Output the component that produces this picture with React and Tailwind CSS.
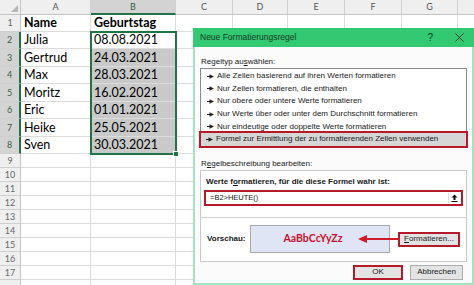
import React from 'react';

const colW = ['w-[70px]', 'w-[85px]', 'w-[57px]', 'w-[55px]', 'w-[57px]', 'w-[57px]', 'w-[56px]', 'w-[60px]'];
const letters = ['A', 'B', 'C', 'D', 'E', 'F', 'G', ''];
const rowH = ['h-[17px]', 'h-[17px]', 'h-[18px]', 'h-[17px]', 'h-[18px]', 'h-[17px]', 'h-[18px]', 'h-[17px]'];

const data = [
    ['Name', 'Geburtstag'],
    ['Julia', '08.08.2021'],
    ['Gertrud', '24.03.2021'],
    ['Max', '28.03.2021'],
    ['Moritz', '16.02.2021'],
    ['Eric', '01.01.2021'],
    ['Heike', '25.05.2021'],
    ['Sven', '30.03.2021'],
];

const rules = [
    'Alle Zellen basierend auf ihren Werten formatieren',
    'Nur Zellen formatieren, die enthalten',
    'Nur obere oder untere Werte formatieren',
    'Nur Werte über oder unter dem Durchschnitt formatieren',
    'Nur eindeutige oder doppelte Werte formatieren',
    'Formel zur Ermittlung der zu formatierenden Zellen verwenden',
];

const Bullet = () => (
    <svg width="7" height="5" viewBox="0 0 7 5" className="shrink-0">
        <path d="M0 2.5 H3" stroke="#222" strokeWidth="1" />
        <path d="M2.5 0.3 L7 2.5 L2.5 4.7 Z" fill="#222" />
    </svg>
);

const Sheet = () => {
    const rows = [];
    for (let r = 1; r <= 18; r++) {
        const h = r <= 8 ? rowH[r - 1] : 'h-[14px]';
        const sel = r >= 2 && r <= 8;
        const d = data[r - 1];
        rows.push(
            <div key={r} className={`flex ${h}`}>
                <div className={`w-[21px] shrink-0 flex items-center justify-center text-[9px] border-b border-[#cfcfcf] ${sel ? 'bg-[#d3d3d3] text-[#3b5e48] border-r-2 border-r-[#217346]' : 'bg-[#efefef] text-[#666] border-r border-r-[#c4c4c4]'}`}>
                    {r <= 17 ? r : ''}
                </div>
                {colW.map((w, c) => {
                    let bg = 'bg-white';
                    if (c === 1 && r >= 3 && r <= 8) bg = 'bg-[#c9c9c9]';
                    const txt = d && c < 2 ? d[c] : '';
                    return (
                        <div key={c} className={`${w} shrink-0 ${bg} border-r border-b border-[#dcdcdc] flex items-end px-[3px] pb-[1px] text-[12.5px] leading-[15px] text-black ${r === 1 ? 'font-bold' : ''}`}>
                            {txt}
                        </div>
                    );
                })}
            </div>
        );
    }
    return (
        <div className="flex flex-col" style={{ fontFamily: 'Lato, "Liberation Sans", sans-serif' }}>
            <div className="flex h-[15px]">
                <div className="w-[21px] shrink-0 bg-[#efefef] border-r border-b border-[#c4c4c4] relative">
                    <div className="absolute right-[2px] bottom-[2px] w-0 h-0 border-l-[7px] border-l-transparent border-b-[7px] border-b-[#b8b8b8]" />
                </div>
                {colW.map((w, c) => (
                    <div key={c} className={`${w} shrink-0 flex items-center justify-center text-[9px] border-r border-[#cfcfcf] ${c === 1 ? 'bg-[#d3d3d3] text-[#2f5d40] border-b-2 border-b-[#217346]' : 'bg-[#efefef] text-[#555] border-b border-b-[#c4c4c4]'}`}>
                        {letters[c]}
                    </div>
                ))}
            </div>
            {rows}
        </div>
    );
};

const Dialog = () => (
    <div
        className="absolute left-[193px] top-[28px] w-[281px] h-[257px] flex flex-col bg-[#fbfbfb] border-2 border-t-0 border-[#a5e2bf] text-[8px] text-[#1a1a1a]"
        style={{ fontFamily: '"Liberation Sans", Arial, sans-serif' }}
    >
        {/* title bar */}
        <div className="h-[19px] bg-[#33c872] flex items-center pl-[7px] pr-[10px] -mx-[2px]">
            <span className="text-[8.5px] text-[#153d25]">Neue Formatierungsregel</span>
            <span className="ml-auto text-[10px] text-[#153d25] mr-[22px]">?</span>
            <svg width="9" height="9" viewBox="0 0 9 9">
                <path d="M0.5 0.5 L8.5 8.5 M8.5 0.5 L0.5 8.5" stroke="#153d25" strokeWidth="1" />
            </svg>
        </div>

        <div className="flex flex-col px-[5px]">
            <div className="mt-[10px] pl-[1px] leading-[10px]">
                Regeltyp au<span className="underline">s</span>wählen:
            </div>
            <div className="mt-[1px] border border-[#8a8a8a] bg-white p-[1px] flex flex-col">
                {rules.map((t, i) => (
                    <div
                        key={i}
                        className={`h-[12.6px] flex items-center gap-[3px] pl-[5px] ${i === 5 ? 'bg-[#d6d6d6] outline-2 outline-[#b51a2a] -mx-[1px] px-[6px]' : ''}`}
                    >
                        <Bullet />
                        <span className="whitespace-nowrap">{t}</span>
                    </div>
                ))}
            </div>

            <div className="mt-[11px] pl-[1px] leading-[10px]">
                R<span className="underline">e</span>gelbeschreibung bearbeiten:
            </div>
            <div className="mt-[1px] h-[92px] border border-[#c9c9c9] bg-white flex flex-col">
                <div className="px-[5px] pt-[6px] border-b border-[#cfcfcf] h-[47px]">
                    <div className="font-bold leading-[10px]">
                        Werte f<span className="underline">o</span>rmatieren, für die diese Formel wahr ist:
                    </div>
                    <div className="mt-[3px] h-[16px] -mx-[2px] border-2 border-[#b51a2a] bg-white flex items-center pl-[4px] pr-[2px]">
                        <span className="text-[7.5px]">=B2&gt;HEUTE()</span>
                        <div className="ml-auto w-[11px] h-[10px] flex items-center justify-center border-l border-[#ddd]">
                            <svg width="7" height="8" viewBox="0 0 7 8">
                                <path d="M3.5 0.5 L6.5 3.5 H4.5 V6 H2.5 V3.5 H0.5 Z" fill="#111" />
                                <path d="M0.5 7.5 H6.5" stroke="#111" strokeWidth="1" />
                            </svg>
                        </div>
                    </div>
                </div>
                <div className="flex-1 flex items-center pl-[6px] pr-[6px]">
                    <span className="font-bold w-[43px]">Vorschau:</span>
                    <div className="w-[140px] h-[28px] bg-[#dfe5f4] border border-[#a9a9a9] flex items-center justify-center">
                        <span className="text-[#c8102e] font-bold text-[10.5px] -ml-[14px]" style={{ fontFamily: 'Lato, sans-serif' }}>AaBbCcYyZz</span>
                    </div>
                    <div className="relative flex-1 h-[10px]">
                        <svg className="absolute left-[-32px] top-0" width="42" height="10" viewBox="0 0 42 10">
                            <path d="M0 5 L9 1 L9 9 Z" fill="#d01b26" />
                            <path d="M8 5 H42" stroke="#d01b26" strokeWidth="2" />
                        </svg>
                    </div>
                    <div className="h-[15px] w-[62px] border-2 border-[#b51a2a] bg-[#e3e3e3] flex items-center justify-center">
                        <span><span className="underline">F</span>ormatieren...</span>
                    </div>
                </div>
            </div>

            <div className="mt-[3px] flex justify-end gap-[7px] pr-[4px]">
                <div className="w-[50px] h-[15px] border-2 border-[#b51a2a] bg-[#e3e3e3] flex items-center justify-center">OK</div>
                <div className="w-[53px] h-[15px] border border-[#adadad] bg-[#e3e3e3] flex items-center justify-center">Abbrechen</div>
            </div>
        </div>
    </div>
);

export default function App() {
    return (
        <div className="relative w-[474px] h-[285px] overflow-hidden bg-white">
            <Sheet />
            {/* selection border B2:B8 */}
            <div className="absolute left-[90px] top-[31px] w-[87px] h-[124px] border-2 border-[#217346] pointer-events-none" />
            <div className="absolute left-[173px] top-[151px] w-[6px] h-[6px] bg-[#217346] border border-white" />
            <Dialog />
        </div>
    );
}
